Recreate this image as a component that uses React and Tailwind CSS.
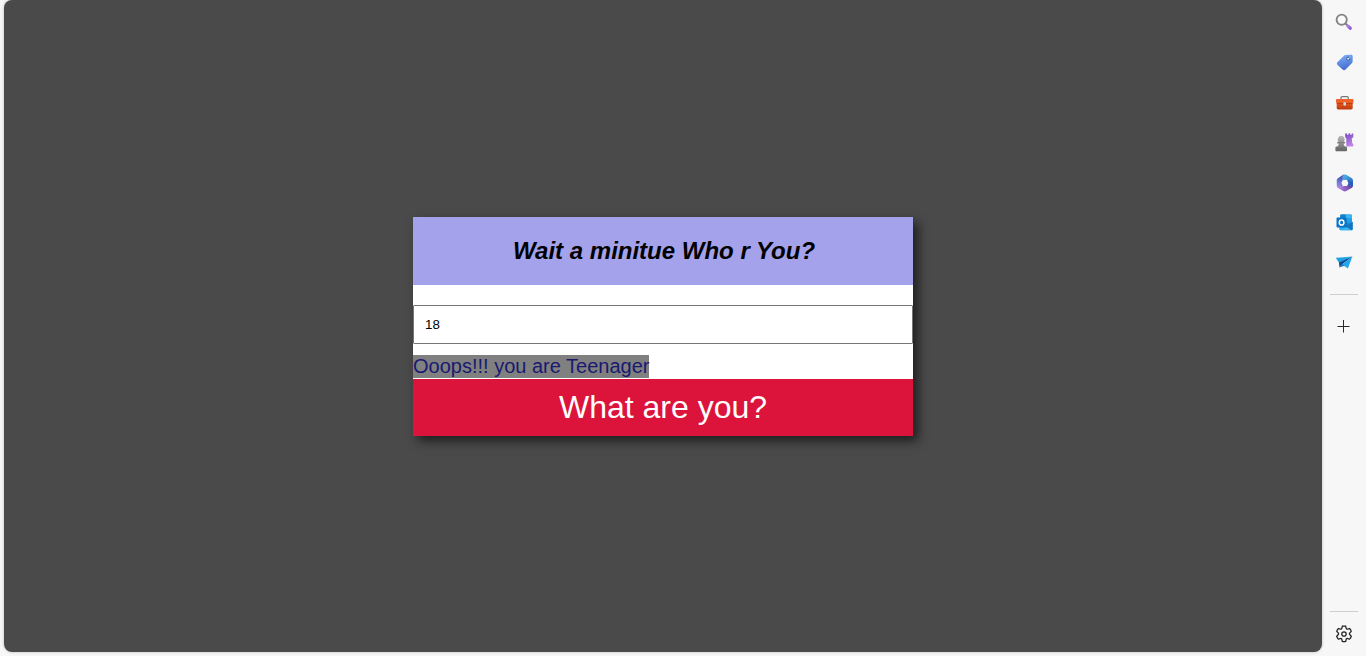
import React from "react";

function SearchIcon() {
  return (
    <svg width="20" height="20" viewBox="0 0 20 20" fill="none">
      <defs>
        <linearGradient id="handle" x1="12" y1="12" x2="17" y2="18" gradientUnits="userSpaceOnUse">
          <stop stopColor="#b995e4" />
          <stop offset="1" stopColor="#8a4fd0" />
        </linearGradient>
      </defs>
      <path d="m11.500 11.500 2 2" stroke="#767676" strokeWidth="1.800" />
      <path d="m13.800 13.900 2.500 2.300" stroke="url(#handle)" strokeWidth="3.200" strokeLinecap="round" />
      <circle cx="7.700" cy="7.700" r="5.100" fill="#fafafa" stroke="#858585" strokeWidth="1.900" />
    </svg>
  );
}

function TagIcon() {
  return (
    <svg width="20" height="20" viewBox="-0.9 -1.2 20 20" fill="none">
      <defs>
        <linearGradient id="tag" x1="7" y1="3" x2="11" y2="17" gradientUnits="userSpaceOnUse">
          <stop stopColor="#77a7f4" />
          <stop offset="1" stopColor="#4169ce" />
        </linearGradient>
      </defs>
      <path d="M10.500 1.900 16 1.500c1.200 0 1.800.5 1.800 1.600l-.1 5.200c0 .7-.3 1.200-.8 1.700l-6.300 6.400c-1 1-1.900 1-2.900 0l-5-4.600c-1-.9-1-1.900 0-2.900L9 2.600c.4-.4.900-.6 1.500-.7Z" fill="url(#tag)" />
      <circle cx="13.300" cy="5.500" r="1.500" fill="#eef2fa" stroke="#34539e" strokeWidth="1" />
      <path d="m14.200 4.800 1.400-1.100" stroke="#d6e3ff" strokeWidth=".6" />
    </svg>
  );
}

function ToolboxIcon() {
  return (
    <svg width="20" height="20" viewBox="0 0 20 20" fill="none">
      <defs>
        <linearGradient id="box" x1="10" y1="10" x2="10" y2="18" gradientUnits="userSpaceOnUse">
          <stop stopColor="#e65c25" />
          <stop offset="1" stopColor="#bd3708" />
        </linearGradient>
      </defs>
      <path d="M7 7.500V5.800c0-.8.400-1.200 1.200-1.200h4.900c.8 0 1.200.4 1.200 1.200v1.700" stroke="#777" strokeWidth="1.200" />
      <path d="M2.700 10.500h16v5.600c0 .9-.6 1.400-1.500 1.400h-13c-.9 0-1.500-.5-1.500-1.400v-5.600Z" fill="url(#box)" />
      <path d="M3.200 7h15.100c.8 0 1.200.4 1.200 1.200v1.900c0 .7-.6 1.200-1.400 1.200H3.400c-.8 0-1.400-.5-1.400-1.200V8.200C2 7.400 2.400 7 3.200 7Z" fill="#ee6228" />
      <path d="M2.700 11.400h16" stroke="#ad3108" strokeWidth=".7" />
      <path d="M9.400 10.300h2.600v2.200a1.300 1.300 0 0 1-2.600 0v-2.200Z" fill="#c9dde5" />
    </svg>
  );
}

function GamesIcon() {
  return (
    <svg width="20" height="20" viewBox="0 0 20 20" fill="none">
      <defs>
        <linearGradient id="rook" x1="12" y1="2" x2="18" y2="14" gradientUnits="userSpaceOnUse">
          <stop stopColor="#7d4cc1" />
          <stop offset="1" stopColor="#c58be9" />
        </linearGradient>
        <linearGradient id="pawn" x1="7" y1="4" x2="7" y2="19" gradientUnits="userSpaceOnUse">
          <stop stopColor="#b9b9b9" />
          <stop offset="1" stopColor="#666" />
        </linearGradient>
      </defs>
      <path d="M11.200 1.500h1.900v1.400h1.200V1.500h2.100v1.400h1.200V1.500h1.700v3.700l-1.500 1.200.4 4.600 1.100 1.300v2.300h-7v-8.200l-1.100-1.200V1.500Z" fill="url(#rook)" />
      <path d="M7.200 3.800a3.500 3.500 0 0 1 2.500 5.900h1.500v1.700H9.700c.1 1.700.5 2.400 1.500 3h.5c.8 0 1.300.5 1.300 1.300v2.700c0 .5-.3.800-.8.800h-10c-.5 0-.8-.3-.8-.8v-2.700c0-.8.5-1.300 1.300-1.300h.5c1-.6 1.400-1.300 1.500-3H3.200V9.700h1.500a3.500 3.500 0 0 1 2.500-5.900Z" fill="url(#pawn)" />
      <path d="M3.700 10.600h7M2 16.200h10.500" stroke="#666" strokeWidth=".6" />
    </svg>
  );
}

function OfficeIcon() {
  return (
    <svg width="20" height="20" viewBox="-0.6 -0.4 19 19" fill="none">
      <defs>
        <linearGradient id="ribbonA" x1="8" y1="2" x2="3" y2="14" gradientUnits="userSpaceOnUse">
          <stop stopColor="#244caa" />
          <stop offset=".55" stopColor="#6571cf" />
          <stop offset="1" stopColor="#a98be6" />
        </linearGradient>
        <linearGradient id="ribbonB" x1="9" y1="2" x2="18" y2="12" gradientUnits="userSpaceOnUse">
          <stop stopColor="#51b4ea" />
          <stop offset="1" stopColor="#2459b8" />
        </linearGradient>
        <linearGradient id="ribbonC" x1="3" y1="14" x2="16" y2="14" gradientUnits="userSpaceOnUse">
          <stop stopColor="#b985e4" />
          <stop offset="1" stopColor="#6642a9" />
        </linearGradient>
      </defs>
      <path d="M8.200 2.300c1-.5 1.900-.5 2.800 0L16 5.200c.9.500 1.400 1.300 1.400 2.300v5l-1.400 2.300-3.300-4.100-1.600-3.600H7.400V4.300c0-.9.200-1.500.8-2Z" fill="url(#ribbonB)" />
      <path d="m8.200 2.300-4.800 2.900C2.500 5.700 2 6.500 2 7.500v5c0 1.100.5 1.800 1.400 2.400l1.500.6 3.200-2.400-1.600-3 1.100-2.700V4.800c0-1.200.3-2 1.200-2.700l-.6.2Z" fill="url(#ribbonA)" />
      <path d="M2.400 13.700c1 1.100 2.800 1.100 4.200.3l2-1.100h3l1.400-2.500 4.400-1.200v3.300c0 1-.5 1.800-1.400 2.300l-5 2.900c-.9.500-1.900.5-2.800 0l-4.800-2.800c-.5-.3-.8-.7-1-1.200Z" fill="url(#ribbonC)" />
      <path d="M12.900 10.600V7.300L17.400 9v3.500c-.3 1-1.600 1.100-2.500.6l-2-1.200v-1.300Z" fill="#2761bd" />
      <path d="M8.200 7.200 11.500 7l1.600 3-1.700 2.900H8.200L6.700 10l1.500-2.800Z" fill="#f7f7f7" />
    </svg>
  );
}

function OutlookIcon() {
  return (
    <svg width="20" height="20" viewBox="-0.8 -0.6 20 20" fill="none">
      <rect x="5.500" y="2" width="11.500" height="12" rx="1" fill="#168bd8" />
      <path d="M5.500 2.900c0-.6.400-.9 1-.9H11v4H5.500V2.900Z" fill="#1380cb" />
      <path d="M11 2h5c.6 0 1 .4 1 1v3h-6V2Z" fill="#37b6f0" />
      <path d="M11 6h6v4h-6z" fill="#219fe5" />
      <path d="m4.500 9.500 6.500 4 6.900-4.300v7.300c0 .7-.4 1.100-1.100 1.100H5.600c-.7 0-1.100-.4-1.100-1.100v-7Z" fill="#29a9e9" />
      <path d="m17.900 9.200-7.600 4.500 6.500 3.900c.7 0 1.100-.4 1.100-1.100V9.200Z" fill="#1773bd" />
      <path d="m10.500 13.800 6.200 3.800H5.600l4.900-3.800Z" fill="#38b6ef" />
      <rect x="1.700" y="4.800" width="10.200" height="10.200" rx="1" fill="#0873c7" />
      <ellipse cx="6.800" cy="9.900" rx="2.300" ry="2.600" stroke="#fff" strokeWidth="1.500" />
    </svg>
  );
}

function PlaneIcon() {
  return (
    <svg width="20" height="20" viewBox="-0.2 -1 20 20" fill="none">
      <path d="M1.500 4.700 18.200 3.600 5.400 10.500 1.500 4.700Z" fill="#35b2ed" />
      <path d="M4.700 9.300 18.200 3.600 8.500 11l-3.200 3.500-.6-5.200Z" fill="#0b4e96" />
      <path d="M18.200 3.600 13.700 15.500 7.900 11.500 18.200 3.600Z" fill="#20a6eb" />
      <path d="m5.300 14.500 2.900-3.400 2.200 1.600-5.100 1.800Z" fill="#1f78c5" />
      <path d="m2.300 5.200 13-.5L4.900 9.300 2.300 5.200Z" fill="#239edd" />
    </svg>
  );
}

function PlusIcon() {
  return (
    <svg width="20" height="20" viewBox="0 0 20 20" fill="none">
      <path d="M9.500 4v12.500M3.500 10.500h12" stroke="#292929" strokeWidth="1" />
    </svg>
  );
}

function GearIcon() {
  return (
    <svg width="20" height="20" viewBox="0 0 20 20" fill="none" stroke="#222" strokeWidth="1.250" strokeLinejoin="round">
      <circle cx="10" cy="10" r="2.200" />
      <path d="M8.300 2.200a8 8 0 0 1 3.400 0l.4 1.900a1.200 1.200 0 0 0 1.700 1l1.800-.6a8 8 0 0 1 1.700 2.900l-1.400 1.400a1.200 1.200 0 0 0 0 2l1.400 1.400a8 8 0 0 1-1.700 2.900l-1.800-.5a1.200 1.200 0 0 0-1.700 1l-.4 1.900a8 8 0 0 1-3.400 0l-.4-1.900a1.200 1.200 0 0 0-1.700-1l-1.800.5a8 8 0 0 1-1.700-2.900l1.400-1.400a1.200 1.200 0 0 0 0-2L2.700 7.400a8 8 0 0 1 1.700-2.900l1.800.6a1.200 1.200 0 0 0 1.700-1l.4-1.900Z" />
    </svg>
  );
}

const tools = [
  ["Search", SearchIcon],
  ["Shopping", TagIcon],
  ["Tools", ToolboxIcon],
  ["Games", GamesIcon],
  ["Microsoft 365", OfficeIcon],
  ["Outlook", OutlookIcon],
  ["Drop", PlaneIcon],
];

function Sidebar() {
  return (
    <aside className="flex w-11 shrink-0 flex-col items-center pt-0.5">
      {tools.map(([label, Icon]) => (
        <button key={label} aria-label={label} className="flex h-10 w-full items-center justify-center">
          <Icon />
        </button>
      ))}
      <div className="mt-3 h-px w-7 bg-[#cfcfcf]" />
      <button aria-label="Add" className="mt-[11px] flex h-10 w-full items-center justify-center">
        <PlusIcon />
      </button>
      <div className="mt-auto h-px w-7 bg-[#cfcfcf]" />
      <button aria-label="Settings" className="mb-0.5 flex h-[42px] w-full items-center justify-center pt-0.5">
        <GearIcon />
      </button>
    </aside>
  );
}

export default function App() {
  return (
    <div className="flex h-[656px] w-[1366px] overflow-hidden bg-[#f7f7f7] pl-1 font-['Liberation_Sans',Arial,sans-serif]">
      <main className="flex h-[652px] grow items-center justify-center rounded-lg bg-[#4a4a4a] shadow-[0_0_3px_rgba(0,0,0,0.25)]">
        <section className="flex w-[500px] flex-col items-start bg-white shadow-[5px_5px_10px_rgba(0,0,0,0.6)]">
          <h1 className="flex h-[68px] w-full items-center justify-center bg-[#a3a2ea] pl-0.5 text-2xl font-bold italic text-black">
            Wait a minitue Who r You?
          </h1>
          <input
            aria-label="Age"
            defaultValue="18"
            className="mt-5 h-[39px] w-full rounded-[1px] border border-[#767676] bg-white px-[11px] text-[13.333px] text-black outline-none"
          />
          <p className="mt-[11px] h-[23px] bg-[#808080] text-xl leading-[23px] text-[#191970]">
            Ooops!!! you are Teenager
          </p>
          <button className="mt-px h-[57px] w-full bg-[#dc143c] text-center text-[32px] leading-[57px] text-white">
            What are you?
          </button>
        </section>
      </main>
      <Sidebar />
    </div>
  );
}
